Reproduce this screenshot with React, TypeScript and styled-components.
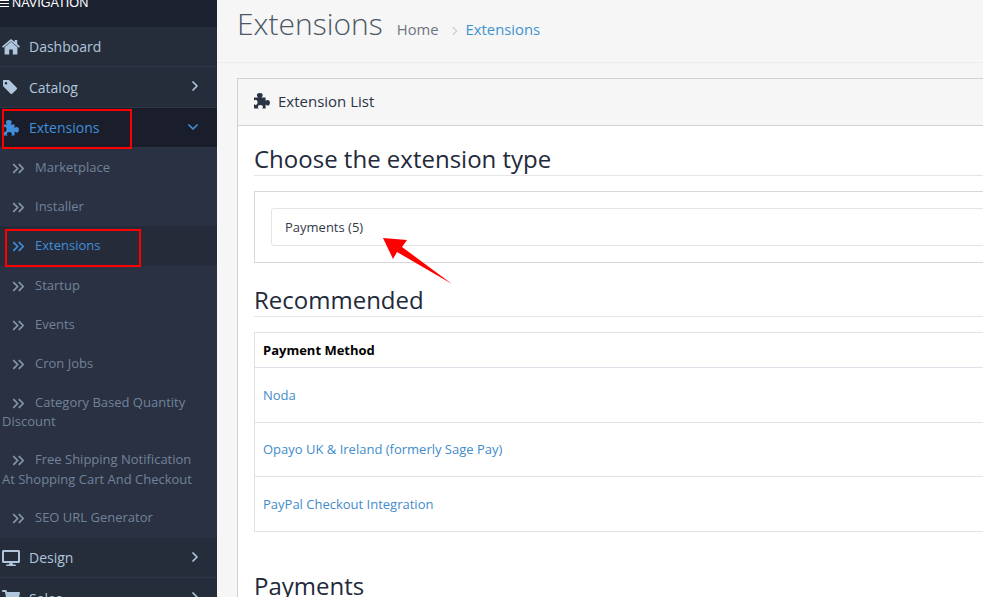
import React from "react";
import styled, { createGlobalStyle } from "styled-components";
import { ChevronDown, ChevronRight, ChevronsRight } from "lucide-react";
import { FaDesktop, FaShoppingCart } from "react-icons/fa";

const Global = createGlobalStyle`
  html, body { margin: 0; padding: 0; background: #f6f6f6; overflow: hidden; }
  body { font-family: "Open Sans", "Noto Sans", sans-serif; font-size: 13px; color: #2a3344; }
  * { box-sizing: border-box; }
`;

const Page = styled.div`
  position: relative;
  display: flex;
  width: 983px;
  height: 597px;
  overflow: hidden;
`;

const Sidebar = styled.nav`
  width: 217px;
  flex: none;
  background: #2a3142;
  overflow: hidden;
`;

const NavHead = styled.div`
  height: 27px;
  background: #1c2230;
  color: #fff;
  font-family: "Liberation Sans", Arial, sans-serif;
  font-size: 12.7px;
  line-height: 13px;
  overflow: hidden;
`;

const NavHeadInner = styled.div`
  display: flex;
  align-items: center;
  gap: 3px;
  margin-top: -3px;
`;

const Burger = styled.span`
  width: 9px;
  height: 7px;
  border-top: 1.5px solid #fff;
  border-bottom: 1.5px solid #fff;
  position: relative;
  &::after {
    content: "";
    position: absolute;
    left: 0;
    right: 0;
    top: 1.5px;
    height: 1.5px;
    background: #fff;
  }
`;

const TopItem = styled.div<{ $active?: boolean }>`
  height: 40.33px;
  padding-top: 0.6px;
  display: flex;
  align-items: center;
  padding-left: 2px;
  background: ${(p) => (p.$active ? "#1a1e2a" : "#262d3a")};
  border-bottom: 1px solid #2d3646;
  color: ${(p) => (p.$active ? "#418fdb" : "#b0c6dc")};
  font-size: 14px;
`;

const TopIcon = styled.span`
  width: 18px;
  height: 18px;
  flex: none;
  display: flex;
  align-items: center;
  justify-content: center;
`;

const TopLabel = styled.span`
  margin-left: 9px;
  flex: 1;
`;

const Caret = styled.span<{ $down?: boolean }>`
  width: 16px;
  margin-right: ${(p) => (p.$down ? "16px" : "14px")};
  display: flex;
  justify-content: center;
  margin-top: -2px;
`;

const SubItem = styled.div<{ $active?: boolean; $wrap?: boolean }>`
  padding: ${(p) => (p.$wrap ? "9.25px 14px 9.25px 2px" : "0 2px")};
  height: ${(p) => (p.$wrap ? "auto" : "39.25px")};
  line-height: ${(p) => (p.$wrap ? "19.5px" : "39px")};
  font-size: 13px;
  background: ${(p) => (p.$active ? "#252b38" : "transparent")};
  color: ${(p) => (p.$active ? "#418fdb" : "#71839a")};
`;

const SubIcon = styled.span<{ $active?: boolean }>`
  display: inline-flex;
  align-items: center;
  width: 33px;
  height: 12px;
  padding-left: 7px;
  color: ${(p) => (p.$active ? "#418fdb" : "#8497ad")};
  vertical-align: -6px;
`;

const Main = styled.main`
  flex: 1;
  min-width: 0;
  overflow: hidden;
`;

const PageHeader = styled.header`
  height: 63px;
  padding: 4px 0 0 20px;
  display: flex;
  align-items: baseline;
  border-bottom: 1px solid #ececec;
  margin-bottom: 15px;
`;

const Title = styled.h1`
  margin: 0;
  font-weight: 300;
  font-size: 30px;
  line-height: 40px;
  color: #4c5664;
`;

const Crumbs = styled.div`
  margin-left: 14px;
  font-size: 14.8px;
  color: #6e7580;
  display: flex;
  align-items: baseline;
`;

const CrumbSep = styled.span`
  margin: 3px 4px 0 9px;
  color: #c9ced6;
  display: inline-flex;
  align-self: center;
`;

const CrumbLink = styled.span`
  color: #3f92cf;
`;

const Panel = styled.section`
  margin-left: 20px;
  width: 1000px;
  border: 1px solid #d1d1d1;
  background: #fff;
`;

const PanelHead = styled.div`
  height: 47px;
  background: #f6f6f6;
  border-bottom: 1px solid #d1d1d1;
  display: flex;
  align-items: center;
  padding: 0 0 2px 16px;
  font-size: 15px;
  color: #2a3344;
  gap: 8px;
`;

const PanelBody = styled.div`
  padding: 15px 16px;
`;

const SectionTitle = styled.h2`
  margin: 0;
  font-weight: 400;
  font-size: 24px;
  line-height: 36px;
  color: #22293a;
  border-bottom: 1px solid #e5e5e5;
  height: 35px;
`;

const Well = styled.div`
  margin-top: 15px;
  border: 1px solid #d8d8d8;
  padding: 16px;
  height: 72px;
  margin-bottom: 19px;
`;

const SelectBox = styled.div`
  height: 38px;
  border: 1px solid #e4e4e4;
  border-radius: 3px;
  padding-left: 13px;
  line-height: 36px;
  font-size: 13px;
  color: #33394a;
`;

const Table = styled.table`
  margin-top: 15px;
  margin-bottom: 36px;
  width: 100%;
  border-collapse: collapse;
  font-size: 13px;
  th, td {
    border: 1px solid #dfe2e8;
    padding: 0 8px;
    text-align: left;
  }
  th { height: 35px; font-weight: 700; color: #000; }
  td { height: 54.5px; color: #428bca; }
`;

const Annotation = styled.div<{ $l: number; $t: number; $w: number; $h: number }>`
  position: absolute;
  left: ${(p) => p.$l}px;
  top: ${(p) => p.$t}px;
  width: ${(p) => p.$w}px;
  height: ${(p) => p.$h}px;
  border: 2px solid #fe0000;
`;

const Arrow = styled.svg`
  position: absolute;
  left: 380px;
  top: 232px;
`;

const PUZZLE =
  "M0 4.5H4.2q-1.3-1-1.3-2.2a2.9 2.3 0 0 1 5.8 0q0 1.2-1.3 2.2H11.6V8q1-1 2-1a2.3 2.8 0 0 1 0 5.6q-1 0-2-1V15.5H8q1-1 1-1.6a2.6 2 0 0 0-5.2 0q0 .6 1 1.6H0V11q1 .9 1.6 .9a2 2.6 0 0 0 0-5.2q-.6 0-1.6 .9Z";

const Puzzle = ({ size }: { size: number }) => (
  <svg width={size} height={size} viewBox="0 0 16 16" fill="currentColor">
    <path d={PUZZLE} />
  </svg>
);

const Home = () => (
  <svg width="18" height="16" viewBox="0 0 18 16" fill="currentColor">
    <path d="M9 2.8 2.6 8.2V15a.6.6 0 0 0 .6.6H7.2V10.6h3.6v5h4a.6.6 0 0 0 .6-.6V8.2Z" />
    <path d="M9 .2a1 1 0 0 0-.7.3L0 7.4l1.1 1.3L9 2.2l7.9 6.5L18 7.4l-2.8-2.3V1h-2.5v2.1L9.7.5A1 1 0 0 0 9 .2Z" />
  </svg>
);

const Tag = () => (
  <svg width="16" height="16" viewBox="0 0 16 16" fill="currentColor" style={{ marginLeft: -2 }}>
    <path
      fillRule="evenodd"
      d="M1.4 1H6.6a1.4 1.4 0 0 1 1 .4l7 7a1.4 1.4 0 0 1 0 2l-4.2 4.2a1.4 1.4 0 0 1-2 0l-7-7a1.4 1.4 0 0 1-.4-1V1.4A.4.4 0 0 1 1.4 1ZM4 3a1.3 1.3 0 1 0 0 2.6A1.3 1.3 0 0 0 4 3Z"
    />
  </svg>
);

const subs: { label: string; active?: boolean; wrap?: boolean }[] = [
  { label: "Marketplace" },
  { label: "Installer" },
  { label: "Extensions", active: true },
  { label: "Startup" },
  { label: "Events" },
  { label: "Cron Jobs" },
  { label: "Category Based Quantity Discount", wrap: true },
  { label: "Free Shipping Notification At Shopping Cart And Checkout", wrap: true },
  { label: "SEO URL Generator" },
];

const RightCaret = () => (
  <Caret>
    <ChevronRight size={18} strokeWidth={2.6} />
  </Caret>
);

export default function App() {
  return (
    <Page>
      <Global />
      <Sidebar>
        <NavHead>
          <NavHeadInner>
            <Burger />
            NAVIGATION
          </NavHeadInner>
        </NavHead>
        <TopItem>
          <TopIcon>
            <Home />
          </TopIcon>
          <TopLabel>Dashboard</TopLabel>
        </TopItem>
        <TopItem>
          <TopIcon>
            <Tag />
          </TopIcon>
          <TopLabel>Catalog</TopLabel>
          <RightCaret />
        </TopItem>
        <TopItem $active>
          <TopIcon>
            <Puzzle size={16} />
          </TopIcon>
          <TopLabel>Extensions</TopLabel>
          <Caret $down>
            <ChevronDown size={18} strokeWidth={2.6} />
          </Caret>
        </TopItem>
        <div>
          {subs.map((s) => (
            <SubItem key={s.label} $active={s.active} $wrap={s.wrap}>
              <SubIcon $active={s.active}>
                <ChevronsRight size={19} strokeWidth={2.2} />
              </SubIcon>
              {s.label}
            </SubItem>
          ))}
        </div>
        <TopItem>
          <TopIcon>
            <FaDesktop size={18} />
          </TopIcon>
          <TopLabel>Design</TopLabel>
          <RightCaret />
        </TopItem>
        <TopItem>
          <TopIcon>
            <FaShoppingCart size={18} />
          </TopIcon>
          <TopLabel>Sales</TopLabel>
          <RightCaret />
        </TopItem>
      </Sidebar>
      <Main>
        <PageHeader>
          <Title>Extensions</Title>
          <Crumbs>
            Home
            <CrumbSep>
              <ChevronRight size={14} strokeWidth={2} />
            </CrumbSep>
            <CrumbLink>Extensions</CrumbLink>
          </Crumbs>
        </PageHeader>
        <Panel>
          <PanelHead>
            <Puzzle size={16} />
            Extension List
          </PanelHead>
          <PanelBody>
            <SectionTitle>Choose the extension type</SectionTitle>
            <Well>
              <SelectBox>Payments (5)</SelectBox>
            </Well>
            <SectionTitle>Recommended</SectionTitle>
            <Table>
              <thead>
                <tr>
                  <th>Payment Method</th>
                </tr>
              </thead>
              <tbody>
                <tr>
                  <td>Noda</td>
                </tr>
                <tr>
                  <td>Opayo UK &amp; Ireland (formerly Sage Pay)</td>
                </tr>
                <tr>
                  <td>PayPal Checkout Integration</td>
                </tr>
              </tbody>
            </Table>
            <SectionTitle>Payments</SectionTitle>
          </PanelBody>
        </Panel>
      </Main>
      <Annotation $l={2} $t={109} $w={130} $h={40} />
      <Annotation $l={5} $t={229} $w={136} $h={38} />
      <Arrow width="76" height="56" viewBox="380 232 76 56">
        <polygon points="383,238 407,240 402,247 452,284 397,252 393,259" fill="#fe0000" />
      </Arrow>
    </Page>
  );
}
